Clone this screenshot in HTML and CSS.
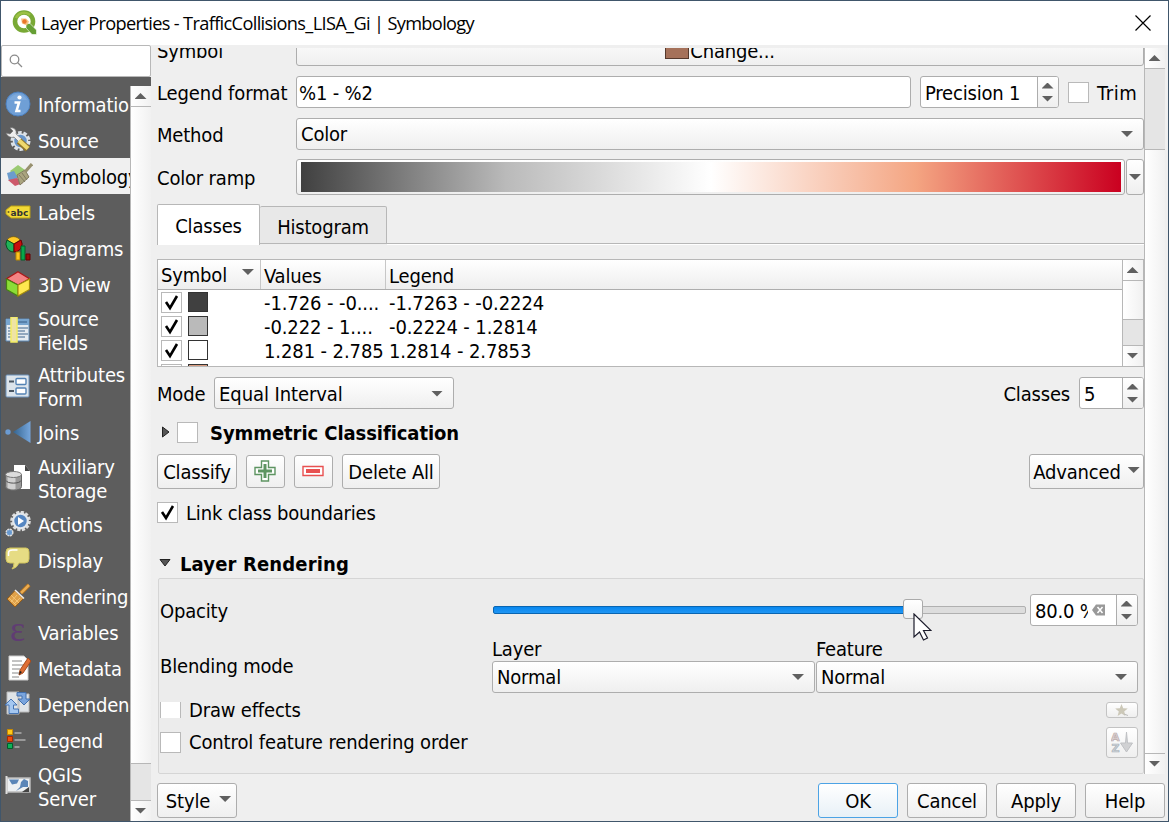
FILE: index.html
```html
<!DOCTYPE html>
<html lang="en">
<head>
<meta charset="utf-8">
<title>Layer Properties</title>
<link rel="stylesheet" href="styles.css">
</head>
<body>
<div class="window">
  <header class="titlebar">
    <svg class="logo" width="25" height="25" viewBox="0 0 25 25"><circle cx="12" cy="11.500" r="9" fill="none" stroke="#79a935" stroke-width="4.6"/><path d="M4 8A9 9 0 0 1 18 5" fill="none" stroke="#9cc044" stroke-width="2.500"/><path d="M14 13.500h4l6.500 6.500v4.500h-4.500L14 18z" fill="#669f35" stroke="#fff" stroke-width=".6"/><path d="M9 8.500h5l3 3-2 4-5-2z" fill="#f8c384"/><circle cx="12.500" cy="11.500" r="2.200" fill="#e9762b"/></svg>
    <h1 class="title">Layer Properties - TrafficCollisions_LISA_Gi | Symbology</h1>
    <svg class="close" width="16" height="16" viewBox="0 0 16 16"><path d="M.5.5l15 15M15.500.5l-15 15" stroke="#000" stroke-width="1.200"/></svg>
  </header>
  <div class="body">
    <aside class="sidebar">
      <div class="search"><svg width="14" height="14" viewBox="0 0 14 14" fill="none" stroke="#8b8b8b" stroke-width="1.300"><circle cx="5.500" cy="5.500" r="4.300"/><path d="M8.500 8.500l4.500 4.500"/></svg></div>
      <div class="nav">
        <ul class="list">
          <li><svg viewBox="0 0 26 26"><circle cx="13" cy="13" r="12" fill="#6f9fd6" stroke="#4c7fbd"/><path d="M4 9a10 10 0 0 1 18 0" fill="#8db4e0" opacity=".5"/><circle cx="14.500" cy="6.500" r="2.100" fill="#fff"/><path d="M9.500 11.500h4.500l-2.500 8.500h4" fill="none" stroke="#fff" stroke-width="2.600"/></svg><span>Information</span></li>
          <li><svg viewBox="0 0 26 26"><circle cx="15.500" cy="14" r="8.500" fill="none" stroke="#dce2e8" stroke-width="3" stroke-dasharray="3.600 1.740"/><circle cx="15.500" cy="14" r="7" fill="#6795ca" stroke="#dce2e8" stroke-width="1.500"/><path d="M1 6c2 4 5 5 8 4l5 5 3-3-6-5c1-4-2-7-6-6l3 3-3 3z" fill="#eee" stroke="#777" stroke-width=".7"/><path d="M14 14l9 8" stroke="#8f742a" stroke-width="7"/><path d="M14 13.500l9 8" stroke="#efd96d" stroke-width="4.200"/></svg><span>Source</span></li>
          <li class="selected"><svg viewBox="0 0 26 26"><path d="M3 8l8-6 7 5-10 7z" fill="#9bca72"/><path d="M0 10l7-2 4 7-9 3z" fill="#6b9ccd"/><path d="M1 17l9-2 6 5-8 3z" fill="#cd596b"/><path d="M10 12l8-5 4 7-9 8z" fill="#aaa47f" stroke="#817b60"/><path d="M18 9l7-8" stroke="#98916f" stroke-width="3.200"/><path d="M12 12l6 7M15 10l5 7" stroke="#817b60"/></svg><span>Symbology</span></li>
          <li><svg viewBox="0 0 26 26"><path d="M6 7h19v12H6l-5-4v-4z" fill="#f2d936" stroke="#bba015"/><circle cx="3.500" cy="13" r="1" fill="#6b6128"/><text x="5.500" y="16.500" class="abc">abc</text></svg><span>Labels</span></li>
          <li><svg viewBox="0 0 26 26"><path d="M9 9L2 5a8 8 0 0 1 13 0z" fill="#ffc928" stroke="#7b5b00" stroke-width=".7"/><path d="M9 9v8A8 8 0 0 1 2 5z" fill="#20b35a" stroke="#064e20"/><path d="M9 9l7-4a8 8 0 0 1-7 12z" fill="#c80d0d" stroke="#600"/><path d="M11 17h4v8h-4z" fill="#ffc421" stroke="#b78700"/><path d="M16 11h4v14h-4z" fill="#08a74b" stroke="#075f2b"/><path d="M21 19h4v6h-4z" fill="#980d0d" stroke="#600"/></svg><span>Diagrams</span></li>
          <li><svg viewBox="0 0 26 26"><path d="M13 .8l11.500 7L13 14 1.500 7.800z" fill="#f48383" stroke="#aa1717" stroke-width="1.200"/><path d="M1.500 8L13 14v11L1.500 18.500z" fill="#8bdd37" stroke="#448211" stroke-width="1.200"/><path d="M24.500 8L13 14v11l11.500-6.500z" fill="#ffe84f" stroke="#a38b0d" stroke-width="1.200"/></svg><span>3D View</span></li>
          <li class="two"><svg viewBox="0 0 26 26"><path d="M1 2h23v22H1z" fill="#e5ebf0" stroke="#5d88b5"/><path d="M1 2h23v6H1z" fill="#78a5cf"/><path d="M13 5h9" stroke="#365c85"/><path d="M3 11h20M3 14h17M3 17h20M3 20h17" stroke="#7792ad" stroke-width="1.400"/><path d="M6 0h6v25H6z" fill="#eee3a5" stroke="#f4ed63" stroke-width="1.500"/></svg><span>Source<br>Fields</span></li>
          <li class="two"><svg viewBox="0 0 26 26"><rect x="1" y="2" width="23" height="22" rx="1" fill="#dce4eb" stroke="#6e94bd"/><path d="M4 8.500h5M4 18h5" stroke="#4a5662" stroke-width="2"/><rect x="11" y="5.500" width="10" height="6" rx="1" fill="#fff" stroke="#5483b5" stroke-width="1.400"/><rect x="11" y="15" width="10" height="6" rx="1" fill="#fff" stroke="#5483b5" stroke-width="1.400"/></svg><span>Attributes<br>Form</span></li>
          <li><svg viewBox="0 0 26 26"><defs><linearGradient id="joinBlue"><stop stop-color="#34648f"/><stop offset="1" stop-color="#76a6dc"/></linearGradient></defs><circle cx="3" cy="13" r="2.700" fill="#6b9bd2"/><path d="M8 13L25.500 2v22z" fill="url(#joinBlue)"/></svg><span>Joins</span></li>
          <li class="two"><svg viewBox="0 0 26 26"><path d="M9 0h11l5 6v18H9z" fill="#fff"/><path d="M20 0v6h5z" fill="#444"/><path d="M.5 9.500v12c0 5 16 5 16 0v-12z" fill="#999" stroke="#666"/><path d="M2.500 12v11c3 1.500 5 1.500 8 1V12z" fill="#d2d2d2"/><ellipse cx="8.500" cy="9.500" rx="8" ry="3" fill="#ddd" stroke="#777"/><path d="M1 15.500c1 3.500 14 3.500 15 0" fill="none" stroke="#555"/></svg><span>Auxiliary<br>Storage</span></li>
          <li><svg viewBox="0 0 26 26"><circle cx="15.500" cy="10" r="9" fill="none" stroke="#ddd" stroke-width="2.600" stroke-dasharray="3.200 1.510"/><circle cx="15.500" cy="10" r="7.300" fill="#5687c2" stroke="#e3e7eb" stroke-width="2.200"/><path d="M13 6l6 4-6 4z" fill="#fff"/><circle cx="4.500" cy="21.500" r="3.300" fill="#6799d0" stroke="#ddd" stroke-width="1.500" stroke-dasharray="2 .59"/></svg><span>Actions</span></li>
          <li><svg viewBox="0 0 26 26"><path d="M5 1h16q3 0 3 4v7q0 4-4 4h-6q-2 5-7 6 2-2 2-6H5q-4 0-4-4V5q0-4 4-4z" fill="#e6dc84" stroke="#d2c55e"/><path d="M3.500 9V6q0-3 4-3h5" fill="none" stroke="#fff" stroke-width="1.500"/></svg><span>Display</span></li>
          <li><svg viewBox="0 0 26 26"><path d="M16 10l8-8" stroke="#a6681c" stroke-width="4.500"/><path d="M16 10l8-8" stroke="#eaac51" stroke-width="2.500"/><path d="M10 7.500l8.500 8-8.500 8.500-8-8z" fill="#dfa14a" stroke="#945b16"/><path d="M6 12l8 8M4 15l7 7M6 19l6-7M9 21l6-6" stroke="#f7ca7c" stroke-width=".8"/><path d="M10 7l9 8.500" stroke="#eee" stroke-width="1.500"/></svg><span>Rendering</span></li>
          <li><svg viewBox="0 0 26 26"><text x="5" y="22" class="epsilon">ε</text></svg><span>Variables</span></li>
          <li><svg viewBox="0 0 26 26"><path d="M4 1h15l4 4v20H4z" fill="#fff" stroke="#ccc"/><path d="M7 6h10M7 10h11M7 14h8M7 18h9M7 22h7" stroke="#888"/><path d="M23 3l3 3-8 12-4 2 1-5z" fill="#df6e34" stroke="#a74a1c"/><path d="M15 16l2 1-3 3z" fill="#222"/></svg><span>Metadata</span></li>
          <li><svg viewBox="0 0 26 26"><path d="M2 1h12v22H2zM13 3h11v18H13z" fill="#dfe3e7" stroke="#bbb"/><path d="M12 1.500h9V8h4l-6 6-6-6h4V5h-5z" fill="#79a4dd" stroke="#426fac"/><path d="M6 8l6 6H8.500v4h5v4.500H4V14H0z" fill="#a4c7f1" stroke="#4674b3"/></svg><span>Dependencies</span></li>
          <li><svg viewBox="0 0 26 26"><path d="M2.500 2.500h5v5h-5z" fill="#ffc91b" stroke="#c98a00"/><path d="M2.500 9.500h5v5h-5z" fill="#ee4c0b" stroke="#a82800"/><path d="M2.500 16.500h5v5h-5z" fill="#0eb158" stroke="#005e29"/><path d="M9.500 6h7M9.500 13h11M9.500 20h5" stroke="#999" stroke-width="2"/></svg><span>Legend</span></li>
          <li class="two"><svg viewBox="0 0 26 26"><path d="M2 5h23v14H2z" fill="#edf0f2" stroke="#bbb" stroke-width="1.500"/><path d="M4 6.500h10l-2 4-5 1zM16 9l3-3 4 2v6h-5l-7 4 4-4z" fill="#5a85b7"/><path d="M17 19l7-5v5z" fill="#444"/><path d="M1.500 3v18" stroke="#ddd" stroke-width="2"/></svg><span>QGIS<br>Server</span></li>
          <li><svg viewBox="0 0 26 26"><path d="M22 4l-6 5h8z" fill="#ddd"/></svg></li>
        </ul>
        <div class="vbar side-scroll"><b class="btn-up"><i class="up"></i></b><b class="thumb"></b><b class="groove"></b><b class="btn-down"><i class="down"></i></b></div>
      </div>
    </aside>
    <div class="right">
      <div class="scrollarea">
        <main class="main">
          <div class="row r-symbol"><label class="name">Symbol</label><button class="control symbol-btn"><span class="swatch"></span>Change...</button></div>
          <div class="row r-format"><label class="name wide">Legend format</label><div class="control field format">%1 - %2</div><div class="control spin precision"><span>Precision 1</span><b class="steps"><i class="up"></i><i class="down"></i></b></div><span class="check"></span><label class="trim">Trim</label></div>
          <div class="row r-method"><label class="name">Method</label><div class="control combo">Color<i class="down"></i></div></div>
          <div class="row r-ramp"><label class="name">Color ramp</label><div class="control ramp"><div class="gradient"></div></div><div class="control ramp-menu"><i class="down"></i></div></div>
          <div class="tabs"><div class="tab active">Classes</div><div class="tab">Histogram</div><div class="tabline"></div></div>
          <div class="table">
            <div class="table-body">
              <div class="thead"><div class="c1">Symbol<i class="down"></i></div><div class="c2">Values</div><div class="c3">Legend</div></div>
              <div class="tr"><div class="c1"><span class="check"><svg viewBox="0 0 19 19"><path d="M4 9l4 6 7-12"/></svg></span><b class="sym dark"></b></div><div class="c2">-1.726 - -0....</div><div class="c3">-1.7263 - -0.2224</div></div>
              <div class="tr"><div class="c1"><span class="check"><svg viewBox="0 0 19 19"><path d="M4 9l4 6 7-12"/></svg></span><b class="sym gray"></b></div><div class="c2">-0.222 - 1....</div><div class="c3">-0.2224 - 1.2814</div></div>
              <div class="tr"><div class="c1"><span class="check"><svg viewBox="0 0 19 19"><path d="M4 9l4 6 7-12"/></svg></span><b class="sym"></b></div><div class="c2">1.281 - 2.785</div><div class="c3">1.2814 - 2.7853</div></div>
              <div class="tr"><div class="c1"><span class="check"></span><b class="sym salmon"></b></div></div>
            </div>
            <div class="vbar"><b class="btn-up"><i class="up"></i></b><b class="thumb"></b><b class="groove"></b><b class="btn-down"><i class="down"></i></b></div>
          </div>
          <div class="row r-mode"><label class="mode-name">Mode</label><div class="control combo mode">Equal Interval<i class="down"></i></div><label class="push classes-name">Classes</label><div class="control spin classes"><span>5</span><b class="steps"><i class="up"></i><i class="down"></i></b></div></div>
          <div class="row r-sym"><svg width="8" height="12" viewBox="0 0 8 12"><path d="M.5 1v10L7 6z" fill="#555" stroke="#222"/></svg><span class="check"></span><h2>Symmetric Classification</h2></div>
          <div class="row r-buttons"><button class="control">Classify</button><button class="control icon"><svg width="22" height="22" viewBox="0 0 22 22"><path d="M7.500 1h7v6.500H21v7h-6.500V21h-7v-6.500H1v-7h6.500z" fill="#fff" stroke="#5d9461" stroke-width="1.400"/><path d="M11 4v14M4 11h14" stroke="#5d9461" stroke-width="3"/></svg></button><button class="control icon"><svg width="22" height="22" viewBox="0 0 22 22"><path d="M1 6.500h20v9H1z" fill="#fff" stroke="#e85050" stroke-width="1.400"/><path d="M4 11h14" stroke="#e85050" stroke-width="4"/></svg></button><button class="control delete">Delete All</button><button class="control push advanced">Advanced<i class="down"></i></button></div>
          <div class="row r-link"><span class="check"><svg viewBox="0 0 19 19"><path d="M4 9l4 6 7-12"/></svg></span><label>Link class boundaries</label></div>
          <div class="row r-render"><svg width="12" height="8" viewBox="0 0 12 8"><path d="M1 .5h10L6 7z" fill="#555" stroke="#222"/></svg><h2>Layer Rendering</h2></div>
          <section class="group">
            <div class="row g-opacity"><label class="g-name">Opacity</label><div class="slider"><div class="fill"></div><div class="rest"></div><div class="handle"></div><svg class="cursor" width="19" height="28" viewBox="0 0 19 28"><path d="M1 1v23l5.500-5 4 8 4-2-4-7.500H18z" fill="#fff" stroke="#1b1b2b" stroke-width="1.200"/></svg></div><div class="control spin percent"><span>80.0 %</span><svg width="14" height="12" viewBox="0 0 14 12"><path d="M0 6l4-5.500h9v11H4z" fill="#999"/><path d="M5.500 3l5 6m0-6l-5 6" stroke="#fff" stroke-width="1.500"/></svg><b class="steps"><i class="up"></i><i class="down"></i></b></div></div>
            <div class="row g-blend"><label class="g-name">Blending mode</label><div class="blend"><label>Layer</label><div class="control combo">Normal<i class="down"></i></div></div><div class="blend"><label>Feature</label><div class="control combo">Normal<i class="down"></i></div></div></div>
            <div class="row g-draw"><span class="check cut"></span><label>Draw effects</label><button class="control push tiny"><svg width="14" height="13" viewBox="0 0 14 13"><path d="M6.500 0l1.700 4.200 4.600.3-3.600 3 1.200 4.500-3.900-2.500L2.600 12l1.200-4.500-3.600-3 4.600-.3z" fill="#ccc8b8"/><path d="M9 10l4 1.500" stroke="#bbb"/></svg></button></div>
            <div class="row g-order"><span class="check"></span><label>Control feature rendering order</label><button class="control push sort"><svg width="22" height="22" viewBox="0 0 22 22"><text x="0" y="9.500" class="a">A</text><text x="0.500" y="21" class="z">Z</text><path d="M15.500 1l1 11h5L15.500 21l-6-9h5z" fill="#d0d1d3" stroke="#bfc1c4"/></svg></button></div>
          </section>
        </main>
        <div class="vbar main-scroll"><b class="btn-up"><i class="up"></i></b><b class="groove"></b><b class="thumb"></b><b class="btn-down"><i class="down"></i></b></div>
      </div>
      <footer class="footer"><button class="control style">Style<i class="down"></i></button><button class="control push ok">OK</button><button class="control">Cancel</button><button class="control">Apply</button><button class="control">Help</button></footer>
    </div>
  </div>
</div>
</body>
</html>
```
FILE: styles.css
```css
* { box-sizing: border-box; }
body { margin: 0; font: 20px/24px "DejaVu Sans Condensed", "DejaVu Sans", sans-serif; font-stretch: condensed; letter-spacing: -0.18px; color: #000; white-space: nowrap; }
.window { width: 1169px; height: 822px; border: 1px solid #40566b; background: #efefef; overflow: hidden; display: flex; flex-direction: column; }
.titlebar { height: 44px; flex: none; background: #fff; display: flex; align-items: center; padding: 0 17px 0 11px; }
.logo { margin-top: -1px; }
.title { margin: 0 0 0 4px; font: 18.2px/24px "Open Sans", sans-serif; letter-spacing: -0.65px; }
.close { margin: 0 0 0 auto; }
.body { display: flex; flex: 1; min-height: 0; }
i { flex: none; width: 12px; height: 6px; background: #606060; }
.up { clip-path: polygon(50% 0, 100% 100%, 0 100%); }
.down { clip-path: polygon(0 0, 100% 0, 50% 100%); }

.sidebar { width: 150px; flex: none; display: flex; flex-direction: column; }
.search { height: 32px; flex: none; background: #fff; border: 1px solid #b8b8b8; border-radius: 2px; padding: 8px 7px; }
.search svg { display: block; }
.nav { flex: 1; min-height: 0; display: flex; background: #5d5d5d; padding-top: 9px; }
.list { width: 129px; margin: 0; padding: 0; list-style: none; overflow: hidden; color: #fff; }
.list li { height: 36px; display: flex; align-items: center; padding-left: 4px; }
.list li.two { height: 56px; }
.list li svg { width: 26px; height: 26px; flex: none; margin-right: 7px; }
.list li span { padding-top: 2px; }
.list .selected { background: #f0f0f0; color: #000; }
.list li.selected svg { margin: 0 7px 0 2px; }
.abc { font: bold 9px "DejaVu Sans", sans-serif; letter-spacing: 0; fill: #333; }
.epsilon { font: 36px "Liberation Serif", serif; fill: #603c73; }

.vbar { display: flex; flex-direction: column; width: 21px; flex: none; border-left: 1px solid #b7b7b7; background: #fbfbfb; }
.vbar b { flex: none; display: flex; align-items: center; justify-content: center; padding-right: 1px; background: linear-gradient(90deg, #fff, #f1f1f1); }
.vbar .btn-up { height: 21px; border-bottom: 1px solid #b7b7b7; }
.vbar .btn-down { height: 20px; padding-bottom: 1px; }
.vbar .groove { background: #e5e5e5; border-bottom: 1px solid #b7b7b7; }
.vbar .thumb { flex: 1; border-bottom: 1px solid #b7b7b7; }
.side-scroll .groove { height: 37px; }
.table .groove { height: 26px; }
.main-scroll .groove { height: 81px; }

.right { flex: 1; min-width: 0; display: flex; flex-direction: column; }
.scrollarea { margin: 3px 3px 0 0; height: 726px; flex: none; display: flex; overflow: hidden; }
.main { width: 993px; padding-left: 6px; flex: none; }
.row { display: flex; align-items: center; }
.control { height: 32px; border: 1px solid #adadad; border-radius: 3px; background: linear-gradient(#fff, #efefef); display: flex; align-items: center; padding: 0 4px; font: inherit; letter-spacing: inherit; color: #000; }
button.control { justify-content: center; width: 80px; height: 35px; padding: 1px 0 0; flex: none; }
.push { margin-left: auto; }
.name { width: 139px; flex: none; padding-top: 2px; }
.wide { letter-spacing: -.1px; }
.check { flex: none; display: block; width: 21px; height: 21px; border: 1px solid #b9b9b9; background: #fff; }
.check svg { display: block; width: 19px; height: 19px; }
.check path { fill: none; stroke: #000; stroke-width: 2.6; }
h2 { font-size: 20px; line-height: 24px; margin: 0; padding-top: 2px; letter-spacing: -.07px; }
.r-symbol { height: 32px; margin-top: -14px; }
button.symbol-btn { width: 848px; height: 32px; }
.swatch { width: 24px; height: 16px; background: #a5715a; border: 1px solid #55392d; margin-right: 1px; }
.r-format { height: 32px; margin-top: 10px; }
.format { width: 615px; padding: 2px 0 0 2px; }
.field, .spin { background: #fff; }
.spin { padding-right: 0; }
.spin span { padding-top: 2px; }
.spin .steps { margin-left: auto; width: 21px; height: 100%; flex: none; border-left: 1px solid #adadad; background: linear-gradient(#fff, #efefef); border-radius: 0 2px 2px 0; display: flex; flex-direction: column; align-items: center; justify-content: center; gap: 7px; padding-right: 1px; }
.precision { width: 139px; margin: 0 9px; }
.trim { margin-left: 8px; padding-top: 2px; letter-spacing: .6px; }
.r-method { height: 32px; margin-top: 10px; }
.combo { flex: 1; padding-right: 10px; justify-content: space-between; }
.r-ramp { height: 36px; margin-top: 9px; }
.ramp { width: 829px; height: 36px; padding: 0 3px 0 4px; }
.gradient { flex: 1; height: 30px; background: linear-gradient(90deg, #404040, #bababa 25%, #fff 50%, #f4a582 75%, #ca0020); }
.ramp-menu { width: 18px; height: 36px; margin-left: 1px; padding: 0 2px; }
.tabs { height: 41px; margin-top: 9px; display: flex; align-items: flex-end; }
.tab { width: 127px; height: 38px; margin-bottom: 1px; text-align: center; border: 1px solid #b7b7b7; border-left: 0; border-radius: 2px 2px 0 0; line-height: 40px; background: #e8e8e8; }
.tab.active { width: 103px; height: 41px; margin: 0; border-left: 1px solid #b7b7b7; border-bottom: 0; background: #fff; line-height: 42px; }
.tabline { flex: 1; border-top: 1px solid #b7b7b7; border-bottom: 1px solid #fff; }
.table { height: 108px; margin-top: 14px; border: 1px solid #b7b7b7; display: flex; background: #fff; overflow: hidden; }
.table-body { flex: 1; }
.thead, .tr { display: flex; height: 24px; align-items: center; }
.thead { height: 30px; border-bottom: 1px solid #adadad; background: linear-gradient(#fff, #eee); }
.c1 { width: 103px; height: 100%; padding-left: 3px; display: flex; align-items: center; }
.c1 i { margin: -6px 0 0 15px; }
.c2 { width: 125px; padding-left: 3px; }
.c3 { padding-left: 3px; }
.thead .c1, .thead .c2, .thead .c3 { height: 29px; line-height: 31px; padding-top: 1px; }
.thead .c1, .thead .c2 { border-right: 1px solid #c7c7c7; }
.tr .c2, .tr .c3 { padding-top: 2px; letter-spacing: -.1px; }
.tr .check { margin-top: 1px; }
.sym { width: 20px; height: 20px; margin-left: 6px; border: 1px solid #333; background: #fff; }
.dark { background: #404040; }
.gray { background: #bababa; }
.salmon { background: #d99c80; }
.r-mode { height: 32px; margin-top: 10px; }
.mode-name { width: 57px; padding-top: 1px; }
.mode { width: 240px; flex: none; letter-spacing: -.08px; padding-top: 1px; }
.classes-name { margin-right: 9px; padding-top: 1px; }
.classes { width: 65px; }
.r-sym { height: 24px; margin-top: 11px; padding-left: 5px; }
.r-sym .check { margin: 0 12px 0 7px; }
.r-buttons { height: 35px; margin-top: 10px; gap: 9px; }
button.icon { width: 39px; height: 33px; padding: 0 1px 1px 0; }
button.delete { width: 98px; }
button.advanced { width: 115px; gap: 7px; margin-left: auto; }
button i { margin-top: -4px; }
.r-link { height: 24px; margin-top: 11px; gap: 8px; }
.r-link label { padding-top: 2px; }
.r-render { height: 24px; margin-top: 27px; padding-left: 2px; gap: 9px; }
.r-render h2 { letter-spacing: .15px; }
.group { height: 196px; margin: 3px 0 0 1px; padding: 15px 5px 0 1px; border: 1px solid #d5d5d5; background: #ececec; border-radius: 2px; }
.g-name { width: 332px; flex: none; }
.g-opacity { height: 32px; }
.g-opacity .g-name { padding-top: 2px; }
.slider { width: 534px; height: 32px; position: relative; display: flex; align-items: center; margin-right: 4px; }
.fill { width: 412px; height: 8px; border: 1px solid #0965b1; background: linear-gradient(#0787ef, #2196f3); border-radius: 2px; margin-left: 1px; }
.rest { flex: 1; height: 8px; border: 1px solid #b0b0b0; background: #ddd; border-radius: 2px; }
.handle { position: absolute; left: 411px; top: 5px; width: 20px; height: 20px; border: 1px solid #aaa; border-radius: 3px; background: linear-gradient(#fff, #f3f3f3); }
.cursor { position: absolute; left: 421px; top: 19px; z-index: 1; }
.percent { width: 108px; }
.percent span { width: 53px; overflow: hidden; }
.percent svg { margin-left: 4px; }
.g-blend { height: 56px; margin-top: 11px; align-items: flex-start; }
.g-blend .g-name { margin-top: 17px; }
.blend { width: 323px; margin-right: 1px; }
.blend:last-child { width: 322px; margin: 0; }
.blend label { display: block; }
.g-draw { height: 16px; margin-top: 9px; gap: 8px; }
.cut { height: 16px; border-top: 0; border-bottom: 0; }
button.tiny { width: 32px; height: 16px; padding: 0; border-color: #c3c3c3; }
.g-order { height: 30px; margin-top: 9px; gap: 8px; letter-spacing: -.12px; }
button.sort { width: 32px; height: 31px; padding: 0; border-color: #c3c3c3; }
.a, .z { font: bold 11px "DejaVu Sans", sans-serif; fill: #ddd3d3; stroke: #b9aaaa; stroke-width: .7px; }
.z { fill: #ccd3d9; stroke: #a9b0b7; }
.footer { display: flex; gap: 9px; padding: 9px 3px 0 6px; }
button.style { gap: 9px; padding-left: 3px; }
.footer .ok { border-color: #4ca3e5; background: linear-gradient(#fff, #e8f1f7); }
```
